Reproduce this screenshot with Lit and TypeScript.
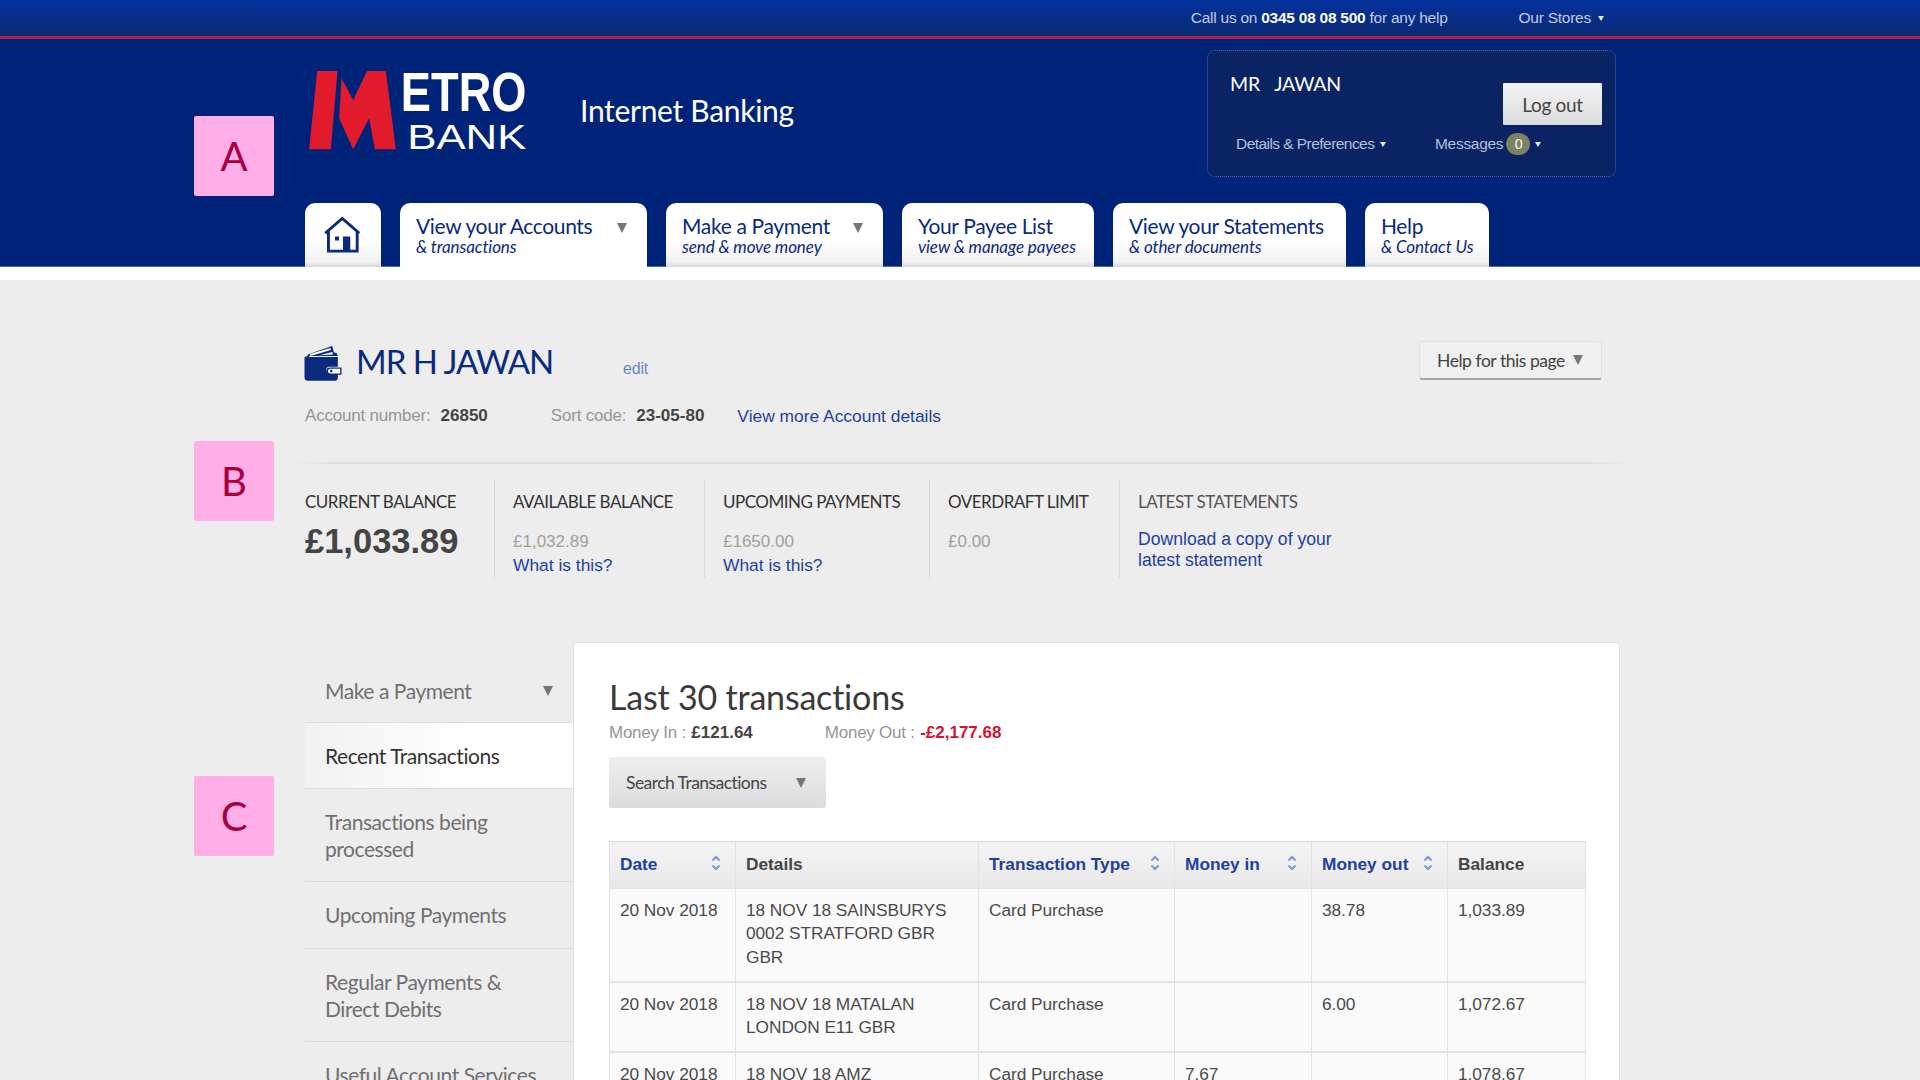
import { LitElement, css, html, svg } from "lit";
import { customElement } from "lit/decorators.js";

const sortIcon = svg`<svg class="sort" width="10" height="16" viewBox="0 0 10 16"><path d="M1.500 5.500 5 2l3.500 3.500M1.500 10.500 5 14l3.500-3.500" fill="none" stroke="#7f96d0" stroke-width="2"/></svg>`;

const rows = [
  ["20 Nov 2018", ["18 NOV 18 SAINSBURYS", "0002 STRATFORD GBR", "GBR"], "Card Purchase", "", "38.78", "1,033.89"],
  ["20 Nov 2018", ["18 NOV 18 MATALAN", "LONDON E11 GBR"], "Card Purchase", "", "6.00", "1,072.67"],
  ["20 Nov 2018", ["18 NOV 18 AMZ"], "Card Purchase", "7.67", "", "1,078.67"],
] as const;

const tabs = [
  { t: "View your Accounts", s: "& transactions", w: 247, arrow: true, active: true },
  { t: "Make a Payment", s: "send & move money", w: 217, arrow: true },
  { t: "Your Payee List", s: "view & manage payees", w: 192 },
  { t: "View your Statements", s: "& other documents", w: 233 },
  { t: "Help", s: "& Contact Us", w: 124 },
];

@customElement("app-root")
export class AppRoot extends LitElement {
  static styles = css`
    :host {
      display: block;
      position: relative;
      height: 1080px;
      overflow: hidden;
      background: #ededed;
      font-family: "Liberation Sans", Arial, sans-serif;
      color: #444;
    }
    a { color: #1f3fa0; text-decoration: none; }
    .cab { font-family: Lato, "Open Sans", sans-serif; }
    .wrap { margin-left: 305px; width: 1310px; }

    .topbar {
      height: 36px;
      border-bottom: 3px solid #a9204f;
      background: linear-gradient(#03319d, #0b2a72);
      display: flex;
      justify-content: flex-end;
      align-items: center;
      padding-right: 316px;
      font-size: 15.500px;
      letter-spacing: -0.250px;
      color: #c3cbe2;
    }
    .topbar b { color: #fff; }
    .stores { margin-left: 71px; display: flex; align-items: center; gap: 7px; }
    .caret { width: 0; height: 0; border: 3.500px solid transparent; border-top: 5px solid #e4e8f2; border-bottom: 0; }

    .header { height: 228px; background: #00237a; box-shadow: inset 0 -1px 0 #4a66ad; }
    .brand { display: flex; align-items: flex-start; height: 164px; padding-top: 11px; box-sizing: border-box; }
    .logo { margin: 20px 0 0 3px; }
    .ib { color: #fff; font-size: 30px; font-weight: 400; letter-spacing: -0.300px; margin: 42px 0 0 50px; }
    .userbox {
      margin-left: auto;
      width: 409px;
      height: 127px;
      box-sizing: border-box;
      background: #0a2463;
      border: 1px dotted #3a64c4;
      border-radius: 8px;
      padding: 21px 13px 0 22px;
      margin-right: -1px;
    }
    .usertop { display: flex; justify-content: space-between; align-items: flex-start; }
    .uname { color: #fff; font-size: 19.500px; line-height: 24px; word-spacing: 10px; letter-spacing: -0.200px; }
    .logout {
      margin-top: 11px;
      width: 99px;
      height: 42px;
      box-sizing: border-box;
      background: linear-gradient(#f4f4f4, #dcdcdc);
      color: #444;
      font-size: 19px;
      letter-spacing: -0.300px;
      display: flex;
      align-items: center;
      justify-content: center;
      border-radius: 1px;
    }
    .userlinks { display: flex; align-items: center; height: 22px; margin: 8px 0 0 6px; color: #b5bfdb; font-size: 15.500px; letter-spacing: -0.550px; }
    .details { display: flex; align-items: center; gap: 6px; width: 199px; }
    .msg { letter-spacing: -0.300px; }
    .badge { width: 24px; height: 22px; border-radius: 11px; background: #7c8263; color: #fff; font-size: 14px; display: flex; align-items: center; justify-content: center; margin: 0 5px 0 3px; }

    .nav { display: flex; gap: 19px; height: 64px; }
    .tab {
      box-sizing: border-box;
      border-radius: 10px 10px 0 0;
      background: linear-gradient(#fff 55%, #f1f1f3 92%, #d8d8d8);
      padding: 11px 0 0 16px;
      color: #0a2a7e;
      position: relative;
    }
    .tab.on { background: #fff; }
    .home { width: 76px; padding: 11px 0 0 16px; }
    .tt { font-size: 21px; line-height: 24px; letter-spacing: -0.350px; white-space: nowrap; }
    .ts { font-size: 17px; line-height: 18px; font-style: italic; letter-spacing: -0.100px; white-space: nowrap; }
    .arrow { position: absolute; top: 20px; right: 20px; }
    .tri { width: 0; height: 0; border: 5.500px solid transparent; border-top: 10px solid #77776f; border-bottom: 0; display: inline-block; }

    .strip { height: 13px; background: #fff; }

    .titlerow { display: flex; align-items: flex-start; height: 135px; box-sizing: border-box; padding-top: 61px; }
    .wallet { margin: 4px 13px 0 -2px; }
    h1 { margin: -2px 0 0; color: #0a2a7e; font-size: 33px; line-height: 44px; font-weight: 400; letter-spacing: -1px; width: 267px; white-space: nowrap; }
    .edit { color: #6b86c8; font-size: 16px; margin-top: 19px; letter-spacing: -0.200px; }
    .help {
      margin-left: auto;
      margin-right: 13px;
      width: 183px;
      height: 39px;
      box-sizing: border-box;
      background: #f0f0f0;
      border: 1px solid #e2e2e2;
      border-bottom: 2px solid #a8a8a8;
      border-radius: 3px;
      display: flex;
      align-items: center;
      gap: 8px;
      padding-left: 17px;
      color: #444;
      font-size: 17.500px;
      letter-spacing: -0.450px;
    }
    .acct { display: flex; align-items: center; height: 24px; margin-top: -11px; font-size: 17px; color: #959595; letter-spacing: -0.200px; }
    .acct b { color: #444; margin-left: 10px; letter-spacing: 0; }
    .acct .sort-code { margin-left: 63px; }
    .acct a { margin-left: 33px; font-size: 17.400px; letter-spacing: 0; }
    .rule { height: 2px; margin: 34px -15px 0 -10px; background: linear-gradient(90deg, #ececec, #dedede 3%, #dedede 97%, #ececec); }

    .stats { display: flex; margin-top: 16px; height: 98px; }
    .stat { box-sizing: border-box; border-left: 1px solid #d9d9d9; padding: 11px 0 0 18px; }
    .stat:first-child { border-left: 0; padding-left: 0; }
    .lab { font-size: 17px; line-height: 22px; letter-spacing: -0.500px; color: #333; white-space: nowrap; }
    .lab.dim { color: #555; }
    .big { font-size: 34.500px; font-weight: 700; line-height: 40px; margin-top: 8px; color: #444; }
    .val { font-size: 17px; line-height: 24px; color: #a0a0a0; margin-top: 17px; }
    .lnk { font-size: 17.400px; line-height: 23px; display: block; }
    .dl { font-size: 17.600px; line-height: 21px; display: block; margin-top: 16px; }

    .main { display: flex; margin-top: 64px; align-items: flex-start; }
    .side { width: 268px; flex: none; padding-top: 17px; }
    .item {
      box-sizing: border-box;
      padding: 0 20px;
      border-bottom: 1px solid #dcdcdc;
      color: #707070;
      font-size: 21px;
      line-height: 27.500px;
      letter-spacing: -0.450px;
      display: flex;
      align-items: center;
    }
    .item span { flex: 1; }
    .item.on { background: linear-gradient(90deg, #f1f1f1, #fff 60%); color: #333; }
    .card {
      flex: none;
      width: 1047px;
      height: 500px;
      box-sizing: border-box;
      background: #fff;
      border: 1px solid #e0e0e0;
      border-radius: 5px 5px 0 0;
      padding: 33px 35px 0 35px;
    }
    h2 { margin: 0 0 4px; font-size: 34px; line-height: 42px; font-weight: 400; letter-spacing: -0.200px; color: #3a3a3a; }
    .money { display: flex; font-size: 17px; line-height: 22px; color: #959595; letter-spacing: -0.250px; }
    .money b { color: #444; letter-spacing: 0; margin-left: 1px; }
    .money .out { margin-left: 72px; }
    .money .neg { color: #d8112f; }
    .search {
      margin-top: 13px;
      width: 217px;
      height: 51px;
      box-sizing: border-box;
      background: linear-gradient(#efefef, #dcdcde);
      border-radius: 3px;
      display: flex;
      align-items: center;
      justify-content: space-between;
      padding: 0 20px 0 17px;
      color: #444;
      font-size: 17.500px;
      letter-spacing: -0.550px;
    }
    table { margin-top: 33px; width: 976px; border-collapse: collapse; table-layout: fixed; font-size: 17.300px; line-height: 23.300px; color: #4a4a4a; }
    th {
      height: 47px;
      box-sizing: border-box;
      padding: 0 14px 0 10px;
      text-align: left;
      background: linear-gradient(#f4f4f4, #e8e8e8);
      border: 1px solid #e3e3e3;
      border-bottom: 0;
      border-top: 1px solid #ddd;
      font-weight: 700;
      color: #444;
      white-space: nowrap;
    }
    th div { display: flex; align-items: center; justify-content: space-between; }
    th a { color: #1f3fa0; }
    td { padding: 10px 10px 12px; vertical-align: top; background: #fafafa; border: 1px solid #e3e3e3; border-bottom-width: 2px; white-space: nowrap; letter-spacing: -0.050px; }
    .sort { flex: none; margin-top: -4px; }

    .tag {
      position: absolute;
      left: 194px;
      width: 80px;
      height: 80px;
      background: #ffaee8;
      border-radius: 2px;
      color: #a8003d;
      font-size: 40px;
      font-weight: 400;
      display: flex;
      align-items: center;
      justify-content: center;
    }
    .a { top: 116px; }
    .b { top: 441px; }
    .c { top: 776px; }
  `;

  render() {
    return html`
      <div class="topbar">
        <span>Call us on <b>0345 08 08 500</b> for any help</span>
        <span class="stores">Our Stores <i class="caret"></i></span>
      </div>

      <div class="header">
        <div class="wrap">
          <div class="brand">
            <svg class="logo" width="222" height="80" viewBox="55 60 665 240">
              <path fill="#e11b2b" d="M82 63h61l-20 235H58zM232 63h56l30 235h-63l-17-93-48 93-42-93 7-120 35 65z"/>
              <text x="333" y="183" font-family="Liberation Sans" font-weight="700" font-size="165" fill="#fff" textLength="377" lengthAdjust="spacingAndGlyphs">ETRO</text>
              <text x="352" y="298" font-family="Liberation Sans" font-size="107" fill="#fff" textLength="358" lengthAdjust="spacingAndGlyphs">BANK</text>
            </svg>
            <div class="ib cab">Internet Banking</div>
            <div class="userbox">
              <div class="usertop">
                <div class="uname cab">MR JAWAN</div>
                <div class="logout cab">Log out</div>
              </div>
              <div class="userlinks">
                <span class="details">Details &amp; Preferences <i class="caret"></i></span>
                <span class="msg">Messages</span><span class="badge">0</span><i class="caret"></i>
              </div>
            </div>
          </div>

          <div class="nav cab">
            <div class="tab home">
              <svg width="44" height="40" viewBox="100 50 120 110">
                <path d="M111 103 158 62l47 41M120 96v56h79V96" fill="none" stroke="#0a2a7e" stroke-width="8"/>
                <path d="M160 112h20v40h-20zM138 112h11v11h-11z" fill="#0a2a7e"/>
              </svg>
            </div>
            ${tabs.map(
              (t) => html`
                <div class="tab ${t.active ? "on" : ""}" style="width:${t.w}px">
                  <div class="tt">${t.t}</div>
                  <div class="ts">${t.s}</div>
                  ${t.arrow ? html`<i class="tri arrow"></i>` : ""}
                </div>
              `
            )}
          </div>
        </div>
      </div>
      <div class="strip"></div>

      <div class="wrap">
        <div class="titlerow">
          <svg class="wallet" width="40" height="38" viewBox="40 435 120 115">
            <path fill="#0a2a7e" d="M52 470c0-4 2-6 6-8l70-24 5 20 8 1 4 9H58v3h87v30h-27c-5 0-8 4-8 9s3 9 8 9h27v15c0 5-3 9-8 9H54c-6 0-10-4-10-10v-60c0-2 3-3 8-3z"/>
            <path fill="#fff" d="M60 462 122 444l2 6-62 18zM90 466 128 456l2 8z"/>
            <path fill="#0a2a7e" d="M120 503h36v22h-36c-6 0-10-5-10-11s4-11 10-11z"/>
            <path fill="#fff" d="M122 507h30v14h-30c-4 0-7-3-7-7s3-7 7-7z"/>
            <circle cx="125" cy="514" r="4" fill="#0a2a7e"/>
          </svg>
          <h1 class="cab">MR H JAWAN</h1>
          <a class="edit">edit</a>
          <div class="help cab">Help for this page <i class="tri"></i></div>
        </div>

        <div class="acct">
          <span>Account number:</span><b>26850</b>
          <span class="sort-code">Sort code:</span><b>23-05-80</b>
          <a>View more Account details</a>
        </div>
        <div class="rule"></div>

        <div class="stats">
          <div class="stat" style="width:189px">
            <div class="lab cab">CURRENT BALANCE</div>
            <div class="big">£1,033.89</div>
          </div>
          <div class="stat" style="width:210px">
            <div class="lab cab">AVAILABLE BALANCE</div>
            <div class="val">£1,032.89</div>
            <a class="lnk">What is this?</a>
          </div>
          <div class="stat" style="width:225px">
            <div class="lab cab">UPCOMING PAYMENTS</div>
            <div class="val">£1650.00</div>
            <a class="lnk">What is this?</a>
          </div>
          <div class="stat" style="width:190px">
            <div class="lab cab">OVERDRAFT LIMIT</div>
            <div class="val">£0.00</div>
          </div>
          <div class="stat" style="width:280px">
            <div class="lab dim cab">LATEST STATEMENTS</div>
            <a class="dl">Download a copy of your<br />latest statement</a>
          </div>
        </div>

        <div class="main">
          <div class="side cab">
            <div class="item" style="height:64px"><span>Make a Payment</span><i class="tri"></i></div>
            <div class="item on" style="height:66px">Recent Transactions</div>
            <div class="item" style="height:93px">Transactions being<br />processed</div>
            <div class="item" style="height:67px">Upcoming Payments</div>
            <div class="item" style="height:93px">Regular Payments &amp;<br />Direct Debits</div>
            <div class="item" style="height:66px">Useful Account Services</div>
          </div>
          <div class="card">
            <h2 class="cab">Last 30 transactions</h2>
            <div class="money">
              <span>Money In : <b>£121.64</b></span>
              <span class="out">Money Out : <b class="neg">-£2,177.68</b></span>
            </div>
            <div class="search cab">Search Transactions <i class="tri"></i></div>
            <table>
              <colgroup>
                <col style="width:126px" /><col style="width:243px" /><col style="width:196px" />
                <col style="width:137px" /><col style="width:136px" /><col style="width:138px" />
              </colgroup>
              <tr>
                <th><div><a>Date</a>${sortIcon}</div></th>
                <th>Details</th>
                <th><div><a>Transaction Type</a>${sortIcon}</div></th>
                <th><div><a>Money in</a>${sortIcon}</div></th>
                <th><div><a>Money out</a>${sortIcon}</div></th>
                <th>Balance</th>
              </tr>
              ${rows.map(
                (r) => html`
                  <tr>
                    <td>${r[0]}</td>
                    <td>${r[1].map((l, i) => html`${i ? html`<br />` : ""}${l}`)}</td>
                    <td>${r[2]}</td>
                    <td>${r[3]}</td>
                    <td>${r[4]}</td>
                    <td>${r[5]}</td>
                  </tr>
                `
              )}
            </table>
          </div>
        </div>
      </div>

      <div class="tag a cab">A</div>
      <div class="tag b cab">B</div>
      <div class="tag c cab">C</div>
    `;
  }
}
